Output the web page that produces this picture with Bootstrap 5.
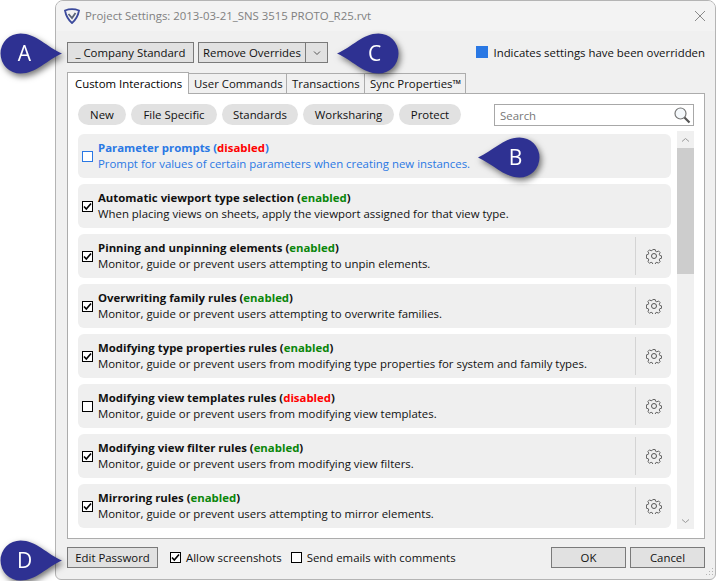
<!DOCTYPE html>
<html lang="en"><head><meta charset="utf-8"><title>Project Settings</title>
<link rel="stylesheet" href="https://cdn.jsdelivr.net/npm/bootstrap@5.3.0/dist/css/bootstrap.min.css">
<style>
html,body{height:581px;overflow:hidden;background:#fff;}
body{font-family:"Open Sans","Noto Sans","Liberation Sans",sans-serif;font-size:11.4px;color:#111;position:relative;}
.dlg{margin-left:55px;width:661px;height:580px;background:#f0f0f0;border:1px solid #b4b4b4;border-radius:8px 8px 6px 6px;position:relative;overflow:hidden;}
.ttl{height:30px;background:#f3f3f3;color:#808080;padding-left:8px;gap:5px;}
.ttl svg{flex:none}
.xbtn{margin-left:auto;margin-right:9px;}
.main{padding:11px 10px 0 11px;}
.bar{height:21px;}
.wbtn{height:21px;padding:0;font-size:11.4px;line-height:17px;color:#111;background:#e1e1e1;border:1px solid #7a7a7a;border-radius:0;display:flex;align-items:center;justify-content:center;flex:none;}
.wa{width:127px;margin-right:4px;}.wb{width:108px;}.wc{width:23px;margin-left:-1px;}
.legend{margin-left:auto;gap:5px;}
.swatch{width:12px;height:12px;background:#2a78e4;}
.tabsx{margin-top:8px;height:22px;border:0;align-items:flex-end;flex-wrap:nowrap;}
.tabsx .nav-link{height:20px;padding:0 0 0 5px;font-size:11.4px;line-height:17px;color:#111;background:#f0f0f0;border:1px solid #acacac;border-bottom:0;border-left:0;border-radius:0;margin:0;text-align:left;white-space:nowrap;}
.tabsx .nav-link.active{height:22px;line-height:19px;background:#fff;border:1px solid #acacac;border-bottom:0;width:122px;padding-left:7px;position:relative;z-index:1;margin-bottom:-1px;}
.t2{width:98px}.t3{width:78px;}.t4{width:101px}
.panel{height:446px;width:638px;background:#fff;border:1px solid #acacac;padding:10px 10px 0 10px;}
.filters{height:22px;gap:5px;margin-bottom:8px;}
.chip{height:21px;border:0;border-radius:11px;background:#e1e1e1;color:#111;font-size:11.4px;padding:0;line-height:21px;text-align:center;flex:none;}
.ch1{width:48px}.ch2{width:86px}.ch3{width:76px}.ch4{width:91px}.ch5{width:62px}
.srch{flex:none;margin-left:28px;width:200px;height:22px;border:1px solid #a8a8a8;background:#fff;padding:0 2px 0 5px;margin-top:0;}
.srch input{border:0;outline:0;padding:0;width:170px;font-size:11.4px;color:#333;background:transparent;box-shadow:none;height:20px;min-height:0;border-radius:0;}
.srch input::placeholder{color:#777;opacity:1;}
.srch svg{flex:none}
.lst{gap:6px;width:593px;flex:none;}
.rowi{height:44px;border-radius:6px;background:#efefef;padding-left:4px;}
.rowi .form-check-input{flex:none;width:11px;height:11px;margin:0 5px 0 0;border:1px solid #000;border-radius:0;background-color:#fff;box-shadow:none;}
.form-check-input:checked{background-color:#fff;border-color:#000;background-size:9px 9px;background-image:url("data:image/svg+xml,%3Csvg xmlns='http://www.w3.org/2000/svg' viewBox='0 0 9 9'%3E%3Cpath d='M1 4.500 3.300 7 8 1.500' fill='none' stroke='%23000' stroke-width='1.600'/%3E%3C/svg%3E");}
.txtb{line-height:16px;white-space:nowrap;}
.txtb b{font-weight:700;}
.on{color:#0a860a}.off{color:#f00}
.ovr{color:#2a78e4;}
.ovr .form-check-input{border-color:#2a78e4;}
.gearc{margin-left:auto;width:36px;height:38px;border-left:1px solid #d4d4d4;}
.sbar{flex:none;width:17px;height:398px;background:#f0f0f0;margin-left:6px;margin-top:-3px;}
.thumb{height:126px;background:#cdcdcd;margin-bottom:auto;}
.arr{height:17px;flex:none;}
.foot{padding:8px 10px 0 11px;height:30px;}
.w1{width:91px;margin-right:12px;}.w2{width:75px;margin-right:4px;}
.foot .form-check-input{flex:none;width:11px;height:11px;margin:0 5px 0 0;border:1px solid #000;border-radius:0;box-shadow:none;}
.fchk{margin-right:9px;}
.grip{position:absolute;right:1px;bottom:1px;}
.pin{position:absolute;filter:drop-shadow(2px 3px 3px rgba(0,0,0,.55));width:62px;height:41px;z-index:5;}
.pin span{position:absolute;top:0;width:41px;height:40px;line-height:40px;text-align:center;color:#fff;font-size:21px;font-family:"Open Sans",sans-serif;}
.pa{left:0;top:33px}.pb{left:478px;top:137px}.pc{left:337px;top:33px}.pd{left:0;top:540px}
.pa span,.pd span{left:4px}.pb span,.pc span{right:4px}
.flip{transform:scaleX(-1)}
</style></head>
<body>
<div class="dlg d-flex flex-column">
  <div class="ttl d-flex align-items-center">
    <svg width="16" height="16" viewBox="0 0 16 16"><path d="M1 2.500 C5 1 11 1 15 2.500 C14 8 11.500 12 8 15 C4.500 12 2 8 1 2.500Z" fill="none" stroke="#3b4a9c" stroke-width="1.800"/><path d="M4.500 6 L8 10 L11.500 5" fill="none" stroke="#5a6478" stroke-width="1.800"/></svg>
    <span>Project Settings: 2013-03-21_SNS 3515 PROTO_R25.rvt</span>
    <svg class="xbtn" width="12" height="12" viewBox="0 0 12 12"><path d="M1 1 11 11M11 1 1 11" stroke="#8a8a8a" stroke-width="1"/></svg>
  </div>
  <div class="main">
    <div class="bar d-flex align-items-center">
      <button class="btn wbtn wa">_ Company Standard</button>
      <button class="btn wbtn wb">Remove Overrides</button>
      <button class="btn wbtn wc"><svg width="8" height="6" viewBox="0 0 8 6"><path d="M1 1.500 4 4.500 7 1.500" fill="none" stroke="#555" stroke-width="1"/></svg></button>
      <div class="legend d-flex align-items-center"><span class="swatch"></span><span>Indicates settings have been overridden</span></div>
    </div>
    <ul class="nav nav-tabs tabsx d-flex">
      <li class="nav-item"><button class="nav-link active">Custom Interactions</button></li>
      <li class="nav-item"><button class="nav-link t2">User Commands</button></li>
      <li class="nav-item"><button class="nav-link t3">Transactions</button></li>
      <li class="nav-item"><button class="nav-link t4">Sync Properties™</button></li>
    </ul>
    <div class="panel d-flex flex-column">
      <div class="filters d-flex align-items-start">
        <button class="btn chip ch1">New</button><button class="btn chip ch2">File Specific</button><button class="btn chip ch3">Standards</button><button class="btn chip ch4">Worksharing</button><button class="btn chip ch5">Protect</button>
        <div class="srch d-flex align-items-center justify-content-between"><input class="form-control" placeholder="Search" aria-label="Search">
          <svg width="18" height="18" viewBox="0 0 18 18"><circle cx="7.500" cy="7.500" r="5.500" fill="#f4f8fb" stroke="#777" stroke-width="1.200"/><path d="M11.500 11.500 16.500 16.500" stroke="#555" stroke-width="2.200"/></svg></div>
      </div>
      <div class="d-flex">
        <div class="lst d-flex flex-column">
          <div class="rowi ovr d-flex align-items-center"><input class="form-check-input" type="checkbox"><div class="txtb"><b>Parameter prompts (<span class="off">disabled</span>)</b><br>Prompt for values of certain parameters when creating new instances.</div></div>
          <div class="rowi d-flex align-items-center"><input class="form-check-input" type="checkbox" checked><div class="txtb"><b>Automatic viewport type selection (<span class="on">enabled</span>)</b><br>When placing views on sheets, apply the viewport assigned for that view type.</div></div>
          <div class="rowi d-flex align-items-center"><input class="form-check-input" type="checkbox" checked><div class="txtb"><b>Pinning and unpinning elements (<span class="on">enabled</span>)</b><br>Monitor, guide or prevent users attempting to unpin elements.</div><div class="gearc d-flex align-items-center justify-content-center"><svg width="16" height="16" viewBox="0 0 16 16" fill="none" stroke="#555"><path d="M6.700 .8h2.600l.5 2 1.400.6 1.800-1 1.800 1.800-1 1.800.6 1.400 2 .5v2.600l-2 .5-.6 1.400 1 1.800-1.800 1.800-1.800-1-1.400.6-.5 2H6.700l-.5-2-1.400-.6-1.800 1-1.800-1.800 1-1.800-.6-1.400-2-.5V6.700l2-.5.6-1.400-1-1.800 1.800-1.800 1.800 1 1.400-.6z" transform="translate(.8 .8) scale(.9)"/><circle cx="8" cy="8" r="2.500"/></svg></div></div>
          <div class="rowi d-flex align-items-center"><input class="form-check-input" type="checkbox" checked><div class="txtb"><b>Overwriting family rules (<span class="on">enabled</span>)</b><br>Monitor, guide or prevent users attempting to overwrite families.</div><div class="gearc d-flex align-items-center justify-content-center"><svg width="16" height="16" viewBox="0 0 16 16" fill="none" stroke="#555"><path d="M6.700 .8h2.600l.5 2 1.400.6 1.800-1 1.800 1.800-1 1.800.6 1.400 2 .5v2.600l-2 .5-.6 1.400 1 1.800-1.800 1.800-1.800-1-1.400.6-.5 2H6.700l-.5-2-1.400-.6-1.800 1-1.800-1.800 1-1.800-.6-1.400-2-.5V6.700l2-.5.6-1.400-1-1.800 1.800-1.800 1.800 1 1.400-.6z" transform="translate(.8 .8) scale(.9)"/><circle cx="8" cy="8" r="2.500"/></svg></div></div>
          <div class="rowi d-flex align-items-center"><input class="form-check-input" type="checkbox" checked><div class="txtb"><b>Modifying type properties rules (<span class="on">enabled</span>)</b><br>Monitor, guide or prevent users from modifying type properties for system and family types.</div><div class="gearc d-flex align-items-center justify-content-center"><svg width="16" height="16" viewBox="0 0 16 16" fill="none" stroke="#555"><path d="M6.700 .8h2.600l.5 2 1.400.6 1.800-1 1.800 1.800-1 1.800.6 1.400 2 .5v2.600l-2 .5-.6 1.400 1 1.800-1.800 1.800-1.800-1-1.400.6-.5 2H6.700l-.5-2-1.400-.6-1.800 1-1.800-1.800 1-1.800-.6-1.400-2-.5V6.700l2-.5.6-1.400-1-1.800 1.800-1.800 1.800 1 1.400-.6z" transform="translate(.8 .8) scale(.9)"/><circle cx="8" cy="8" r="2.500"/></svg></div></div>
          <div class="rowi d-flex align-items-center"><input class="form-check-input" type="checkbox"><div class="txtb"><b>Modifying view templates rules (<span class="off">disabled</span>)</b><br>Monitor, guide or prevent users from modifying view templates.</div><div class="gearc d-flex align-items-center justify-content-center"><svg width="16" height="16" viewBox="0 0 16 16" fill="none" stroke="#555"><path d="M6.700 .8h2.600l.5 2 1.400.6 1.800-1 1.800 1.800-1 1.800.6 1.400 2 .5v2.600l-2 .5-.6 1.400 1 1.800-1.800 1.800-1.800-1-1.400.6-.5 2H6.700l-.5-2-1.400-.6-1.800 1-1.800-1.800 1-1.800-.6-1.400-2-.5V6.700l2-.5.6-1.400-1-1.800 1.800-1.800 1.800 1 1.400-.6z" transform="translate(.8 .8) scale(.9)"/><circle cx="8" cy="8" r="2.500"/></svg></div></div>
          <div class="rowi d-flex align-items-center"><input class="form-check-input" type="checkbox" checked><div class="txtb"><b>Modifying view filter rules (<span class="on">enabled</span>)</b><br>Monitor, guide or prevent users from modifying view filters.</div><div class="gearc d-flex align-items-center justify-content-center"><svg width="16" height="16" viewBox="0 0 16 16" fill="none" stroke="#555"><path d="M6.700 .8h2.600l.5 2 1.400.6 1.800-1 1.800 1.800-1 1.800.6 1.400 2 .5v2.600l-2 .5-.6 1.400 1 1.800-1.800 1.800-1.800-1-1.400.6-.5 2H6.700l-.5-2-1.400-.6-1.800 1-1.800-1.800 1-1.800-.6-1.400-2-.5V6.700l2-.5.6-1.400-1-1.800 1.800-1.800 1.800 1 1.400-.6z" transform="translate(.8 .8) scale(.9)"/><circle cx="8" cy="8" r="2.500"/></svg></div></div>
          <div class="rowi d-flex align-items-center"><input class="form-check-input" type="checkbox" checked><div class="txtb"><b>Mirroring rules (<span class="on">enabled</span>)</b><br>Monitor, guide or prevent users attempting to mirror elements.</div><div class="gearc d-flex align-items-center justify-content-center"><svg width="16" height="16" viewBox="0 0 16 16" fill="none" stroke="#555"><path d="M6.700 .8h2.600l.5 2 1.400.6 1.800-1 1.800 1.800-1 1.800.6 1.400 2 .5v2.600l-2 .5-.6 1.400 1 1.800-1.800 1.800-1.800-1-1.400.6-.5 2H6.700l-.5-2-1.400-.6-1.800 1-1.800-1.800 1-1.800-.6-1.400-2-.5V6.700l2-.5.6-1.400-1-1.800 1.800-1.800 1.800 1 1.400-.6z" transform="translate(.8 .8) scale(.9)"/><circle cx="8" cy="8" r="2.500"/></svg></div></div>
        </div>
        <div class="sbar d-flex flex-column">
          <div class="arr d-flex align-items-center justify-content-center"><svg width="9" height="6" viewBox="0 0 9 6"><path d="M1 4.500 4.500 1.500 8 4.500" fill="none" stroke="#999"/></svg></div>
          <div class="thumb"></div>
          <div class="arr d-flex align-items-center justify-content-center"><svg width="9" height="6" viewBox="0 0 9 6"><path d="M1 1.500 4.500 4.500 8 1.500" fill="none" stroke="#999"/></svg></div>
        </div>
      </div>
    </div>
  </div>
  <div class="foot d-flex align-items-start">
    <button class="btn wbtn w1">Edit Password</button>
    <div class="d-flex align-items-center bar fchk"><input class="form-check-input" type="checkbox" checked aria-label="Allow screenshots"><span>Allow screenshots</span></div>
    <div class="d-flex align-items-center bar"><input class="form-check-input" type="checkbox" aria-label="Send emails"><span>Send emails with comments</span></div>
    <button class="btn wbtn w2 ms-auto">OK</button>
    <button class="btn wbtn w2 me-0">Cancel</button>
  </div>
  <svg class="grip" width="10" height="10" viewBox="0 0 10 10" fill="#b5b5b5"><rect x="8" y="0" width="1" height="1"/><rect x="5" y="3" width="1" height="1"/><rect x="8" y="3" width="1" height="1"/><rect x="2" y="6" width="1" height="1"/><rect x="5" y="6" width="1" height="1"/><rect x="8" y="6" width="1" height="1"/></svg>
</div>
<div class="pin pa"><svg width="62" height="41" viewBox="0 0 62 41"><path d="M62 20.500C47 14 36 .5 20.500.5a20 20 0 0 0 0 40C36 40.500 47 27 62 20.500Z" fill="#2e3192"/></svg><span>A</span></div>
<div class="pin pb"><svg class="flip" width="62" height="41" viewBox="0 0 62 41"><path d="M62 20.500C47 14 36 .5 20.500.5a20 20 0 0 0 0 40C36 40.500 47 27 62 20.500Z" fill="#2e3192"/></svg><span>B</span></div>
<div class="pin pc"><svg class="flip" width="62" height="41" viewBox="0 0 62 41"><path d="M62 20.500C47 14 36 .5 20.500.5a20 20 0 0 0 0 40C36 40.500 47 27 62 20.500Z" fill="#2e3192"/></svg><span>C</span></div>
<div class="pin pd"><svg width="62" height="41" viewBox="0 0 62 41"><path d="M62 20.500C47 14 36 .5 20.500.5a20 20 0 0 0 0 40C36 40.500 47 27 62 20.500Z" fill="#2e3192"/></svg><span>D</span></div>
<script src="https://cdn.jsdelivr.net/npm/bootstrap@5.3.0/dist/js/bootstrap.bundle.min.js"></script>
</body></html>
